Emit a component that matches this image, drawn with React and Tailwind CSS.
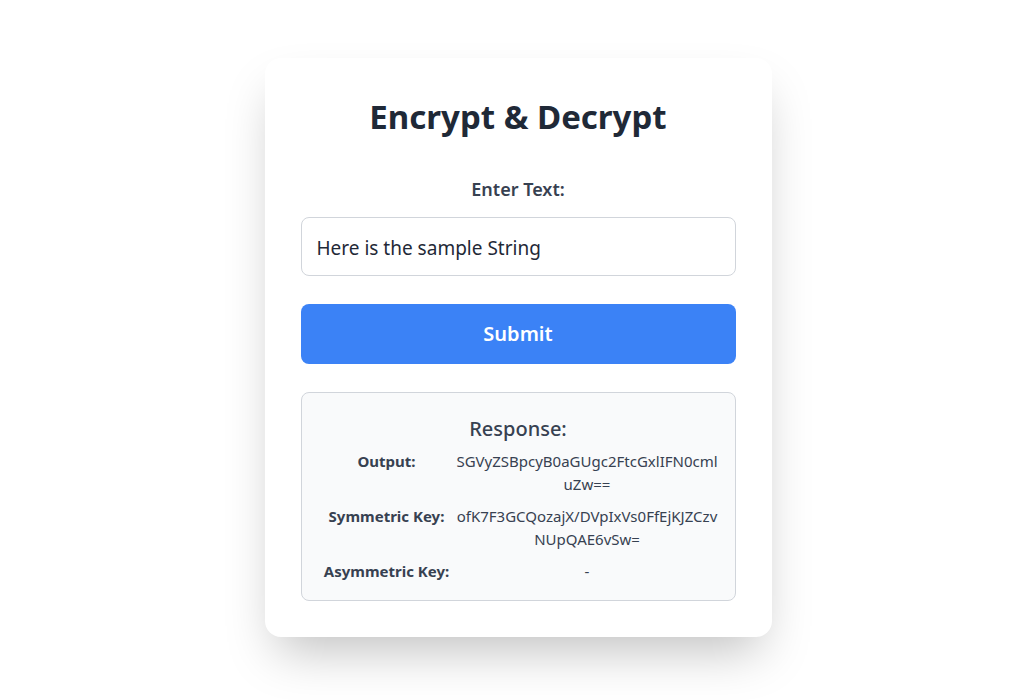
const rows = [
  { label: "Output:", value: "SGVyZSBpcyB0aGUgc2FtcGxlIFN0cmluZw==" },
  { label: "Symmetric Key:", value: "ofK7F3GCQozajX/DVpIxVs0FfEjKJZCzvNUpQAE6vSw=" },
  { label: "Asymmetric Key:", value: "-" },
];

const App = () => {
  return (
    <div
      className="min-h-screen bg-white flex justify-center pt-[58px]"
      style={{ fontFamily: '"Noto Sans", "Open Sans", sans-serif' }}
    >
      <div className="w-[507px] h-fit bg-white rounded-2xl shadow-2xl px-9 pt-[39px] pb-[36px]">
        <h1 className="text-[33px] leading-10 font-bold text-[#1f2937] text-center mb-[38px]">
          Encrypt &amp; Decrypt
        </h1>

        <label className="block text-center text-lg leading-7 font-semibold text-[#374151] mb-[14px]">
          Enter Text:
        </label>
        <input
          type="text"
          defaultValue="Here is the sample String"
          className="w-full h-[59px] px-[15px] pt-[3px] text-[19px] text-[#1f2937] border border-[#d1d5db] rounded-lg outline-none"
        />

        <button className="mt-7 w-full h-[60px] bg-[#3b82f6] rounded-lg text-white text-xl font-semibold">
          Submit
        </button>

        {/* Response */}
        <div className="mt-7 bg-[#f9fafb] border border-[#d1d5db] rounded-lg px-4 pt-[22px] pb-[17px]">
          <h2 className="text-xl leading-7 font-medium text-[#374151] text-center mb-[7px]">
            Response:
          </h2>
          <div className="grid grid-cols-[138px_1fr] gap-y-[9px] text-[15px] leading-[23px] text-[#374151]">
            {rows.map((row) => (
              <div key={row.label} className="contents">
                <div className="text-center font-bold">{row.label}</div>
                <div className="text-center break-all">{row.value}</div>
              </div>
            ))}
          </div>
        </div>
      </div>
    </div>
  );
};

export default App;
